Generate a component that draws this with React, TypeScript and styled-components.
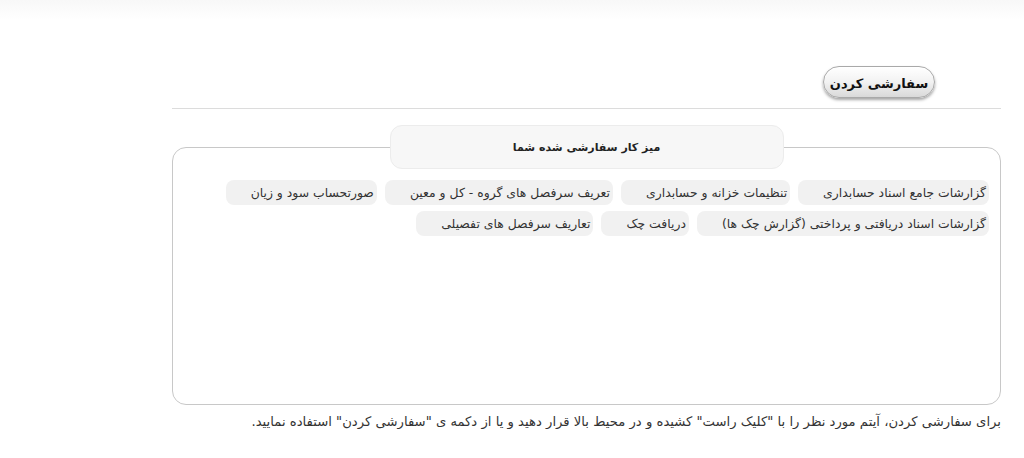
import React from 'react';
import styled, { createGlobalStyle } from 'styled-components';

const items = [
  'گزارشات جامع اسناد حسابداری',
  'تنظیمات خزانه و حسابداری',
  'تعریف سرفصل های گروه - کل و معین',
  'صورتحساب سود و زیان',
  'گزارشات اسناد دریافتی و پرداختی (گزارش چک ها)',
  'دریافت چک',
  'تعاریف سرفصل های تفصیلی',
];

function App() {
  return (
    <>
      <GlobalStyle />
      <TopShade />
      <StyledMain>
        <StyledToolbar>
          <StyledButton type="button">سفارشی کردن</StyledButton>
        </StyledToolbar>
        <StyledDivider />
        <StyledPanel>
          <StyledLegend>میز کار سفارشی شده شما</StyledLegend>
          <StyledList>
            {items.map((item) => (
              <StyledItem key={item}>{item}</StyledItem>
            ))}
          </StyledList>
        </StyledPanel>
        <StyledHint>
          برای سفارشی کردن، آیتم مورد نظر را با "کلیک راست" کشیده و در محیط بالا قرار دهید و یا از دکمه ی "سفارشی کردن" استفاده نمایید.
        </StyledHint>
      </StyledMain>
    </>
  );
}

const GlobalStyle = createGlobalStyle`
  body {
    margin: 0;
    background: #fff;
    font-family: "DejaVu Sans", "Noto Sans", sans-serif;
    color: #333;
  }
`;

const TopShade = styled.div`
  height: 20px;
  background: linear-gradient(to bottom, #f8f8f8, #fff);
`;

const StyledMain = styled.main`
  direction: rtl;
  width: 829px;
  margin-left: 172px;
`;

const StyledToolbar = styled.div`
  display: flex;
  padding: 46px 66px 0 0;
  height: 42px;
`;

const StyledButton = styled.button`
  width: 112px;
  height: 32px;
  padding: 2px 0 0 0;
  white-space: nowrap;
  border-radius: 16px;
  border: 1px solid #a9a9a9;
  background: linear-gradient(to bottom, #fff 0%, #f2f2f2 50%, #d9d9d9 100%);
  box-shadow: 0 2px 3px rgba(0, 0, 0, 0.35), inset 0 1px 0 #fff;
  font-family: inherit;
  font-size: 13px;
  font-weight: bold;
  color: #111;
  cursor: pointer;
`;

const StyledDivider = styled.hr`
  margin: 0;
  border: none;
  border-top: 1px solid #dcdcdc;
  width: 829px;
`;

const StyledPanel = styled.fieldset`
  margin: 16px 0 0 0;
  padding: 11px 11px 0 11px;
  height: 280px;
  border: 1px solid #c8c8c8;
  border-radius: 14px;
  box-sizing: border-box;
`;

const StyledLegend = styled.legend`
  margin: 0 auto;
  width: 394px;
  height: 44px;
  box-sizing: border-box;
  padding: 0;
  display: flex;
  align-items: center;
  justify-content: center;
  background: #f7f7f7;
  border: 1px solid #ececec;
  border-radius: 12px;
  font-size: 11px;
  font-weight: bold;
  color: #222;
`;

const StyledList = styled.div`
  display: flex;
  flex-wrap: wrap;
  align-content: flex-start;
  gap: 6px 8px;
`;

const StyledItem = styled.span`
  display: inline-flex;
  align-items: center;
  height: 25px;
  padding: 0 3px 0 25px;
  border-radius: 8px;
  background: #f1f1f1;
  font-size: 12.4px;
  color: #333;
  white-space: nowrap;
`;

const StyledHint = styled.p`
  margin: 9px 0 0 0;
  font-size: 13.2px;
  color: #333;
`;

export default App;
